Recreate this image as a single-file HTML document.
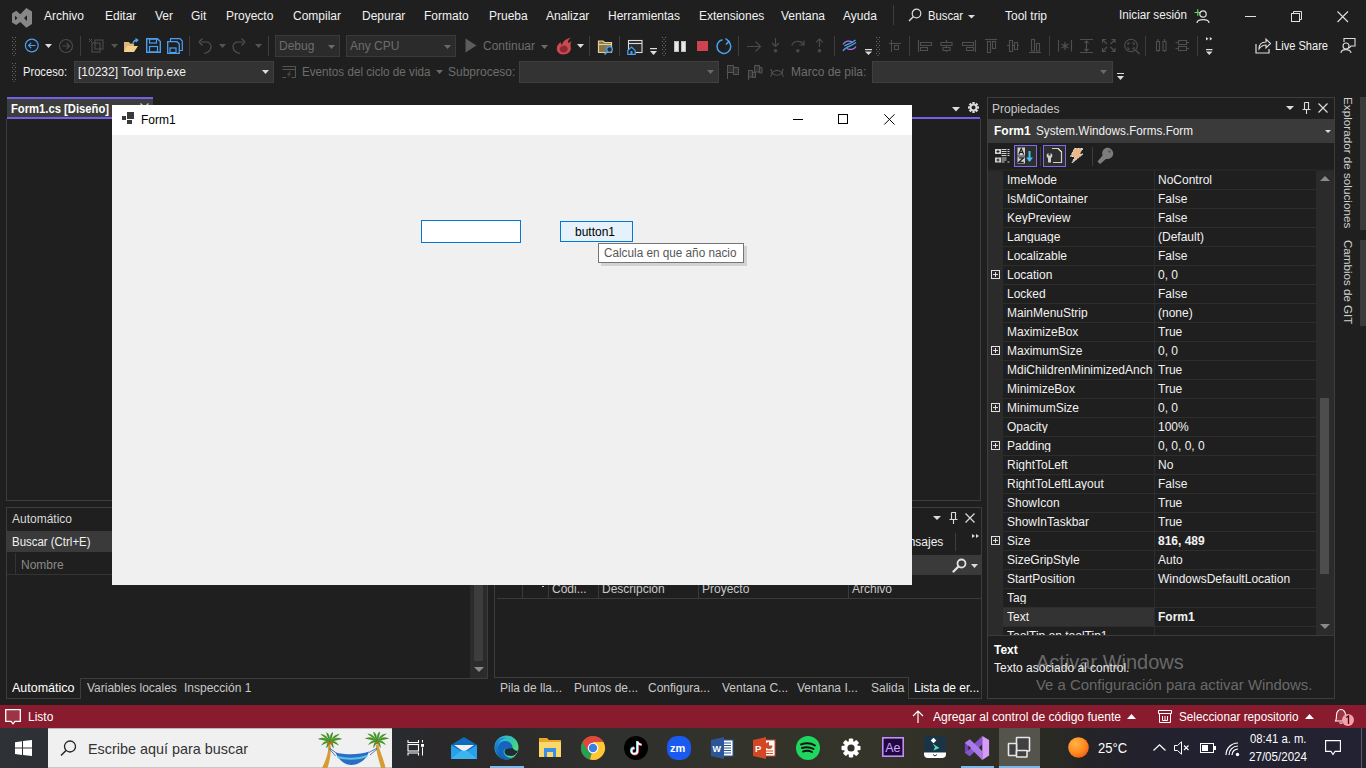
<!DOCTYPE html><html><head><meta charset="utf-8"><style>
html,body{margin:0;padding:0;width:1366px;height:768px;overflow:hidden;background:#1f1f1f;}
body{position:relative;font-family:"Liberation Sans",sans-serif;}
.a{position:absolute;}
.t{white-space:nowrap;line-height:1;}
svg{overflow:visible;}
</style></head><body>
<svg class="a" style="left:11px;top:7px;" width="22" height="22" viewBox="0 0 22 22"><path d="M5.2 3.8 L9.3 7.2 L15.3 1 L21 4.5 V17 L15.3 20.8 L9.3 15 L5.2 18 L1 15.5 V6.5 Z M4 8.7 V13.3 L6.5 11 Z M16 8.2 V14 L13 11 Z" fill="#878787" fill-rule="evenodd"/></svg>
<div class="a t" style="left:44px;top:9.84px;font-size:12px;color:#f1f1f1;">Archivo</div>
<div class="a t" style="left:105px;top:9.84px;font-size:12px;color:#f1f1f1;">Editar</div>
<div class="a t" style="left:155px;top:9.84px;font-size:12px;color:#f1f1f1;">Ver</div>
<div class="a t" style="left:191px;top:9.84px;font-size:12px;color:#f1f1f1;">Git</div>
<div class="a t" style="left:226px;top:9.84px;font-size:12px;color:#f1f1f1;">Proyecto</div>
<div class="a t" style="left:293px;top:9.84px;font-size:12px;color:#f1f1f1;">Compilar</div>
<div class="a t" style="left:362px;top:9.84px;font-size:12px;color:#f1f1f1;">Depurar</div>
<div class="a t" style="left:424px;top:9.84px;font-size:12px;color:#f1f1f1;">Formato</div>
<div class="a t" style="left:489px;top:9.84px;font-size:12px;color:#f1f1f1;">Prueba</div>
<div class="a t" style="left:546px;top:9.84px;font-size:12px;color:#f1f1f1;">Analizar</div>
<div class="a t" style="left:608px;top:9.84px;font-size:12px;color:#f1f1f1;">Herramientas</div>
<div class="a t" style="left:699px;top:9.84px;font-size:12px;color:#f1f1f1;">Extensiones</div>
<div class="a t" style="left:781px;top:9.84px;font-size:12px;color:#f1f1f1;">Ventana</div>
<div class="a t" style="left:843px;top:9.84px;font-size:12px;color:#f1f1f1;">Ayuda</div>
<div class="a" style="left:893px;top:5px;width:1px;height:20px;background:#3d3d3d;"></div>
<svg class="a" style="left:908px;top:8px;" width="14" height="14" viewBox="0 0 14 14"><circle cx="8.5" cy="5.5" r="4.3" fill="none" stroke="#dcdcdc" stroke-width="1.2"/><path d="M5.5 8.5 L1 13" stroke="#dcdcdc" stroke-width="1.4"/></svg>
<div class="a t" style="left:928px;top:9.84px;font-size:12px;color:#f1f1f1;transform-origin:0 0;transform:scaleX(0.9371);">Buscar</div>
<svg class="a" style="left:968px;top:15px;" width="7" height="4" viewBox="0 0 7 4"><path d="M0 0 H7 L3.5 3.5Z" fill="#dcdcdc"/></svg>
<div class="a t" style="left:1005px;top:9.84px;font-size:12px;color:#f1f1f1;">Tool trip</div>
<div class="a t" style="left:1119px;top:8.84px;font-size:12px;color:#f1f1f1;transform-origin:0 0;transform:scaleX(0.9710);">Iniciar sesión</div>
<svg class="a" style="left:1193px;top:7px;" width="16" height="16" viewBox="0 0 16 16"><path d="M1.5 5.5 H8 M4.75 2.2 V8.8" stroke="#5fd35f" stroke-width="1.2"/><circle cx="10" cy="7" r="3.2" fill="none" stroke="#e0e0e0" stroke-width="1.2"/><path d="M4 16 C4 11.5 16 11.5 16 16" fill="none" stroke="#e0e0e0" stroke-width="1.2"/></svg>
<div class="a" style="left:1245px;top:16px;width:11px;height:1px;background:#e0e0e0;"></div>
<svg class="a" style="left:1291px;top:11px;" width="12" height="12" viewBox="0 0 12 12"><rect x="0.5" y="2.5" width="8" height="8" fill="none" stroke="#e0e0e0"/><path d="M2.5 2.5 V0.5 H10.5 V8.5 H8.5" fill="none" stroke="#e0e0e0"/></svg>
<svg class="a" style="left:1337px;top:11px;" width="12" height="12" viewBox="0 0 12 12"><path d="M0.5 0.5 L11 11 M11 0.5 L0.5 11" stroke="#e0e0e0" stroke-width="1.1"/></svg>
<svg class="a" style="left:12px;top:37px;" width="4" height="17" viewBox="0 0 4 17"><rect x="0" y="0" width="1" height="1" fill="#6a6a6a"/><rect x="3" y="0" width="1" height="1" fill="#6a6a6a"/><rect x="1.5" y="2" width="1" height="1" fill="#6a6a6a"/><rect x="0" y="4" width="1" height="1" fill="#6a6a6a"/><rect x="3" y="4" width="1" height="1" fill="#6a6a6a"/><rect x="1.5" y="6" width="1" height="1" fill="#6a6a6a"/><rect x="0" y="8" width="1" height="1" fill="#6a6a6a"/><rect x="3" y="8" width="1" height="1" fill="#6a6a6a"/><rect x="1.5" y="10" width="1" height="1" fill="#6a6a6a"/><rect x="0" y="12" width="1" height="1" fill="#6a6a6a"/><rect x="3" y="12" width="1" height="1" fill="#6a6a6a"/><rect x="1.5" y="14" width="1" height="1" fill="#6a6a6a"/><rect x="0" y="16" width="1" height="1" fill="#6a6a6a"/><rect x="3" y="16" width="1" height="1" fill="#6a6a6a"/><rect x="1.5" y="18" width="1" height="1" fill="#6a6a6a"/></svg>
<svg class="a" style="left:24px;top:38px;" width="16" height="16" viewBox="0 0 16 16"><circle cx="7.8" cy="7.5" r="6.4" fill="none" stroke="#4aa0f0" stroke-width="1.2"/><path d="M11.5 7.5 H4.5 M7.2 4.8 L4.5 7.5 L7.2 10.2" fill="none" stroke="#4aa0f0" stroke-width="1.1"/></svg>
<svg class="a" style="left:45px;top:44px;" width="8" height="4" viewBox="0 0 8 4"><path d="M0 0 H7 L3.5 4Z" fill="#dcdcdc"/></svg>
<svg class="a" style="left:58px;top:38px;" width="16" height="16" viewBox="0 0 16 16"><circle cx="8" cy="8" r="6.5" fill="none" stroke="#4a4a4a" stroke-width="1.2"/><path d="M4.5 8 H11.5 M8.5 5 L11.5 8 L8.5 11" fill="none" stroke="#4a4a4a" stroke-width="1.2"/></svg>
<div class="a" style="left:80px;top:36px;width:1px;height:20px;background:#3d3d3d;"></div>
<svg class="a" style="left:88px;top:38px;" width="18" height="16" viewBox="0 0 18 16"><rect x="4" y="5" width="8" height="9" fill="none" stroke="#505050"/><rect x="7" y="2" width="8" height="9" fill="none" stroke="#505050"/><path d="M1 1 L4 4 M4 1 L1 4" stroke="#505050"/></svg>
<svg class="a" style="left:111px;top:44px;" width="8" height="4" viewBox="0 0 8 4"><path d="M0 0 H7 L3.5 4Z" fill="#555"/></svg>
<svg class="a" style="left:123px;top:38px;" width="16" height="15" viewBox="0 0 16 15"><path d="M1 4 H6 L7 5.5 H11 V14 H1Z" fill="#dcb67a"/><path d="M1 14 L4 8 H15 L11 14Z" fill="#f0d08a"/><path d="M10 5 C11 2 13 2 14.5 2 M12.5 0.5 L14.8 2 L12.8 4" fill="none" stroke="#4aa0f0" stroke-width="1.3"/></svg>
<svg class="a" style="left:146px;top:38px;" width="15" height="15" viewBox="0 0 15 15"><path d="M0.7 0.7 H11.5 L14.3 3.5 V14.3 H0.7Z" fill="none" stroke="#4aa0f0" stroke-width="1.4"/><rect x="3.5" y="1" width="7" height="4" fill="none" stroke="#4aa0f0" stroke-width="1.2"/><rect x="3.5" y="8.5" width="8" height="5.5" fill="none" stroke="#4aa0f0" stroke-width="1.2"/></svg>
<svg class="a" style="left:167px;top:38px;" width="16" height="16" viewBox="0 0 16 16"><path d="M0.7 3.7 H10 L12.3 6 V15.3 H0.7Z" fill="none" stroke="#4aa0f0" stroke-width="1.3"/><path d="M3.5 3.5 V0.7 H13 L15.3 3 V12.5 H12.5" fill="none" stroke="#4aa0f0" stroke-width="1.2"/><rect x="3" y="10" width="6" height="4.5" fill="none" stroke="#4aa0f0" stroke-width="1.2"/></svg>
<div class="a" style="left:189px;top:36px;width:1px;height:20px;background:#3d3d3d;"></div>
<svg class="a" style="left:198px;top:37px;" width="14" height="17" viewBox="0 0 14 17"><path d="M3 5 H8 C12 5 13 8 13 10 C13 13 10 15.5 6 16.5 M1 5 L4.5 1.5 M1 5 L4.5 8.5" fill="none" stroke="#505050" stroke-width="1.2"/></svg>
<svg class="a" style="left:219px;top:44px;" width="8" height="4" viewBox="0 0 8 4"><path d="M0 0 H7 L3.5 4Z" fill="#555"/></svg>
<svg class="a" style="left:232px;top:37px;" width="14" height="17" viewBox="0 0 14 17"><path d="M11 5 H6 C2 5 1 8 1 10 C1 13 4 15.5 8 16.5 M13 5 L9.5 1.5 M13 5 L9.5 8.5" fill="none" stroke="#505050" stroke-width="1.2"/></svg>
<svg class="a" style="left:255px;top:44px;" width="8" height="4" viewBox="0 0 8 4"><path d="M0 0 H7 L3.5 4Z" fill="#555"/></svg>
<div class="a" style="left:268px;top:36px;width:1px;height:20px;background:#3d3d3d;"></div>
<div class="a" style="left:275px;top:35px;width:65px;height:22px;background:#2b2b2b;box-sizing:border-box;border:1px solid #3a3a3a;"></div>
<div class="a t" style="left:279px;top:39.84px;font-size:12px;color:#6d6d6d;">Debug</div>
<svg class="a" style="left:328px;top:45px;" width="8" height="4" viewBox="0 0 8 4"><path d="M0 0 H7 L3.5 4Z" fill="#6a6a6a"/></svg>
<div class="a" style="left:346px;top:35px;width:110px;height:22px;background:#2b2b2b;box-sizing:border-box;border:1px solid #3a3a3a;"></div>
<div class="a t" style="left:350px;top:39.84px;font-size:12px;color:#6d6d6d;">Any CPU</div>
<svg class="a" style="left:444px;top:45px;" width="8" height="4" viewBox="0 0 8 4"><path d="M0 0 H7 L3.5 4Z" fill="#6a6a6a"/></svg>
<svg class="a" style="left:465px;top:38px;" width="12" height="15" viewBox="0 0 12 15"><path d="M0.5 0.5 L11.5 7.5 L0.5 14.5Z" fill="#5c5c5c"/></svg>
<div class="a t" style="left:483px;top:39.84px;font-size:12px;color:#6d6d6d;">Continuar</div>
<svg class="a" style="left:541px;top:45px;" width="8" height="4" viewBox="0 0 8 4"><path d="M0 0 H7 L3.5 4Z" fill="#6a6a6a"/></svg>
<svg class="a" style="left:556px;top:37px;" width="16" height="18" viewBox="0 0 16 18"><path d="M7 17.5 C3 17.5 0.5 14.5 0.8 11 C1 8 3 6.5 4.5 5 C5 6.5 5.2 7.5 6 8 C6.5 5 9 2 15 0.5 C12.5 2.5 11.5 4.5 12 6 C13 5.5 14 5 15.5 4.5 C14 6.5 14.5 8.5 14.8 10.5 C15.2 14.5 12 17.5 7 17.5Z" fill="#d04850"/><path d="M7.5 15.5 C5 15.5 3.5 13.5 3.8 11.5 C4.2 9.5 6 9 7.5 8.5 C9.5 8 11.5 9.5 11.8 11.5 C12 13.5 10.2 15.5 7.5 15.5Z" fill="#8a2a32"/></svg>
<svg class="a" style="left:577px;top:44px;" width="8" height="4" viewBox="0 0 8 4"><path d="M0 0 H7 L3.5 4Z" fill="#dcdcdc"/></svg>
<div class="a" style="left:589px;top:36px;width:1px;height:20px;background:#3d3d3d;"></div>
<svg class="a" style="left:597px;top:40px;" width="18" height="15" viewBox="0 0 18 15"><path d="M1.5 1 H6 L7.5 2.5 H14.5 V12.5 H1.5Z" fill="#857650" stroke="#e9d08e" stroke-width="1.2"/><path d="M1.5 4.5 H14.5" stroke="#e9d08e" stroke-width="1.1"/><circle cx="12.5" cy="9.5" r="2.8" fill="#2a2a2a" stroke="#4aa0f0" stroke-width="1.3"/><path d="M10.5 11.5 L7.5 14.5" stroke="#4aa0f0" stroke-width="1.6"/></svg>
<div class="a" style="left:619px;top:36px;width:1px;height:20px;background:#3d3d3d;"></div>
<svg class="a" style="left:627px;top:39px;" width="16" height="16" viewBox="0 0 16 16"><rect x="1.5" y="1.5" width="13.5" height="12" fill="#2a2a2a" stroke="#dcdcdc" stroke-width="1.1"/><path d="M1.5 4.5 H15" stroke="#dcdcdc" stroke-width="1.1"/><path d="M0.8 11.5 L4.5 8 L8.2 11.5 V15.3 H0.8Z" fill="#1f1f1f" stroke="#4aa0f0" stroke-width="1.2"/><rect x="3.5" y="12" width="2" height="3.3" fill="#4aa0f0"/></svg>
<svg class="a" style="left:650px;top:48px;" width="7" height="7" viewBox="0 0 7 7"><rect x="0" y="0" width="7" height="1.2" fill="#dcdcdc"/><path d="M0 3 H7 L3.5 7Z" fill="#dcdcdc"/></svg>
<svg class="a" style="left:662px;top:37px;" width="4" height="17" viewBox="0 0 4 17"><rect x="0" y="0" width="1" height="1" fill="#6a6a6a"/><rect x="3" y="0" width="1" height="1" fill="#6a6a6a"/><rect x="1.5" y="2" width="1" height="1" fill="#6a6a6a"/><rect x="0" y="4" width="1" height="1" fill="#6a6a6a"/><rect x="3" y="4" width="1" height="1" fill="#6a6a6a"/><rect x="1.5" y="6" width="1" height="1" fill="#6a6a6a"/><rect x="0" y="8" width="1" height="1" fill="#6a6a6a"/><rect x="3" y="8" width="1" height="1" fill="#6a6a6a"/><rect x="1.5" y="10" width="1" height="1" fill="#6a6a6a"/><rect x="0" y="12" width="1" height="1" fill="#6a6a6a"/><rect x="3" y="12" width="1" height="1" fill="#6a6a6a"/><rect x="1.5" y="14" width="1" height="1" fill="#6a6a6a"/><rect x="0" y="16" width="1" height="1" fill="#6a6a6a"/><rect x="3" y="16" width="1" height="1" fill="#6a6a6a"/><rect x="1.5" y="18" width="1" height="1" fill="#6a6a6a"/></svg>
<svg class="a" style="left:674px;top:41px;" width="12" height="11" viewBox="0 0 12 11"><rect x="0.5" y="0.5" width="4" height="10" fill="#e8e8e8" stroke="#bdbdbd"/><rect x="7.5" y="0.5" width="4" height="10" fill="#e8e8e8" stroke="#bdbdbd"/></svg>
<svg class="a" style="left:697px;top:41px;" width="11" height="10" viewBox="0 0 11 10"><rect x="0" y="0" width="11" height="10" fill="#cf4350"/></svg>
<svg class="a" style="left:716px;top:38px;" width="17" height="17" viewBox="0 0 17 17"><path d="M12.2 3.2 A6.9 6.9 0 1 1 6.5 1.8" fill="none" stroke="#4aa0f0" stroke-width="1.5"/><path d="M9.5 0.5 L13 3.3 L10 6.5" fill="none" stroke="#4aa0f0" stroke-width="1.5"/></svg>
<div class="a" style="left:738px;top:36px;width:1px;height:20px;background:#3d3d3d;"></div>
<svg class="a" style="left:747px;top:41px;" width="15" height="11" viewBox="0 0 15 11"><path d="M0 5.5 H13.5 M8.5 0.5 L13.5 5.5 L8.5 10.5" fill="none" stroke="#4a4a4a" stroke-width="1.2"/></svg>
<svg class="a" style="left:771px;top:38px;" width="9" height="15" viewBox="0 0 9 15"><path d="M4.5 0 V8.5 M1 5 L4.5 8.5 L8 5" fill="none" stroke="#4a4a4a" stroke-width="1.2"/><circle cx="4.5" cy="12.8" r="1.8" fill="#4a4a4a"/></svg>
<svg class="a" style="left:791px;top:39px;" width="14" height="14" viewBox="0 0 14 14"><path d="M0.8 6.5 C2.5 1.5 10 1 12.5 5.5 M13 1.5 V6 H8.5" fill="none" stroke="#4a4a4a" stroke-width="1.2"/><circle cx="6.8" cy="11.8" r="1.8" fill="#4a4a4a"/></svg>
<svg class="a" style="left:815px;top:38px;" width="9" height="15" viewBox="0 0 9 15"><path d="M4.5 9 V0.8 M1 4.3 L4.5 0.8 L8 4.3" fill="none" stroke="#4a4a4a" stroke-width="1.2"/><circle cx="4.5" cy="12.8" r="1.8" fill="#4a4a4a"/></svg>
<div class="a" style="left:834px;top:36px;width:1px;height:20px;background:#3d3d3d;"></div>
<svg class="a" style="left:842px;top:39px;" width="15" height="13" viewBox="0 0 15 13"><path d="M1 5.5 C3 1.5 8 1.5 10 3 M5 9.5 C7 11 12 11 14 7.5" fill="none" stroke="#b07ae8" stroke-width="1.3"/><path d="M1 12 C3 7.5 10 7 14 3.5 M2.5 7 C5 5 9 5 13.5 1" fill="none" stroke="#4aa0f0" stroke-width="1.3"/></svg>
<svg class="a" style="left:865px;top:49px;" width="7" height="6" viewBox="0 0 7 6"><rect x="0" y="0" width="7" height="1.2" fill="#dcdcdc"/><path d="M0 2.5 H7 L3.5 6Z" fill="#dcdcdc"/></svg>
<svg class="a" style="left:876px;top:37px;" width="4" height="17" viewBox="0 0 4 17"><rect x="0" y="0" width="1" height="1" fill="#6a6a6a"/><rect x="3" y="0" width="1" height="1" fill="#6a6a6a"/><rect x="1.5" y="2" width="1" height="1" fill="#6a6a6a"/><rect x="0" y="4" width="1" height="1" fill="#6a6a6a"/><rect x="3" y="4" width="1" height="1" fill="#6a6a6a"/><rect x="1.5" y="6" width="1" height="1" fill="#6a6a6a"/><rect x="0" y="8" width="1" height="1" fill="#6a6a6a"/><rect x="3" y="8" width="1" height="1" fill="#6a6a6a"/><rect x="1.5" y="10" width="1" height="1" fill="#6a6a6a"/><rect x="0" y="12" width="1" height="1" fill="#6a6a6a"/><rect x="3" y="12" width="1" height="1" fill="#6a6a6a"/><rect x="1.5" y="14" width="1" height="1" fill="#6a6a6a"/><rect x="0" y="16" width="1" height="1" fill="#6a6a6a"/><rect x="3" y="16" width="1" height="1" fill="#6a6a6a"/><rect x="1.5" y="18" width="1" height="1" fill="#6a6a6a"/></svg>
<svg class="a" style="left:889px;top:40px;" width="16" height="16" viewBox="0 0 16 16"><path d="M0 3.5 H12 M2.5 0 V12" stroke="#4d4d4d" stroke-width="1.1"/><rect x="5.5" y="5.5" width="4" height="4" fill="none" stroke="#4d4d4d" stroke-width="1.1"/></svg>
<div class="a" style="left:909px;top:36px;width:1px;height:20px;background:#3d3d3d;"></div>
<svg class="a" style="left:905px;top:32px" width="310" height="26" viewBox="905 32 310 26"><path d="M918.5 40 V52" fill="none" stroke="#4f4f4f" stroke-width="1.1"/><path d="M920.5 42.5 H931.5 V45.5 H920.5Z" fill="none" stroke="#4f4f4f" stroke-width="1.1"/><path d="M920.5 47.5 H927.5 V50.5 H920.5Z" fill="none" stroke="#4f4f4f" stroke-width="1.1"/><path d="M946.5 40 V52" fill="none" stroke="#4f4f4f" stroke-width="1.1"/><path d="M941 42.5 H952 V45.5 H941Z" fill="#1f1f1f" stroke="#4f4f4f" stroke-width="1.1"/><path d="M943 47.5 H950 V50.5 H943Z" fill="#1f1f1f" stroke="#4f4f4f" stroke-width="1.1"/><path d="M975.5 40 V52" fill="none" stroke="#4f4f4f" stroke-width="1.1"/><path d="M962.5 42.5 H973.5 V45.5 H962.5Z" fill="none" stroke="#4f4f4f" stroke-width="1.1"/><path d="M966.5 47.5 H973.5 V50.5 H966.5Z" fill="none" stroke="#4f4f4f" stroke-width="1.1"/><path d="M985 39.5 H997" fill="none" stroke="#4f4f4f" stroke-width="1.1"/><path d="M987.5 41.5 H990.5 V52.5 H987.5Z" fill="none" stroke="#4f4f4f" stroke-width="1.1"/><path d="M992.5 41.5 H995.5 V48.5 H992.5Z" fill="none" stroke="#4f4f4f" stroke-width="1.1"/><path d="M1007 45.5 H1019" fill="none" stroke="#4f4f4f" stroke-width="1.1"/><path d="M1009.5 40.5 H1012.5 V51.5 H1009.5Z" fill="#1f1f1f" stroke="#4f4f4f" stroke-width="1.1"/><path d="M1014.5 42.5 H1017.5 V49.5 H1014.5Z" fill="#1f1f1f" stroke="#4f4f4f" stroke-width="1.1"/><path d="M1029 52.5 H1041" fill="none" stroke="#4f4f4f" stroke-width="1.1"/><path d="M1031.5 39.5 H1034.5 V51 H1031.5Z" fill="none" stroke="#4f4f4f" stroke-width="1.1"/><path d="M1036.5 43.5 H1039.5 V51 H1036.5Z" fill="none" stroke="#4f4f4f" stroke-width="1.1"/><path d="M1058.5 40 V51.5 M1071.5 40 V51.5" fill="none" stroke="#4f4f4f" stroke-width="1.1"/><path d="M1065 42 V50 M1061.5 44 L1068.5 48 M1068.5 44 L1061.5 48" fill="none" stroke="#4f4f4f" stroke-width="1.3"/><path d="M1080 39.5 H1093 M1080 52.5 H1093 M1086.5 41 V51 M1084.5 43 L1086.5 41 L1088.5 43 M1084.5 49 L1086.5 51 L1088.5 49" fill="none" stroke="#4f4f4f" stroke-width="1.1"/><path d="M1102.5 43 V39.5 H1106 M1111.5 39.5 H1115 V43 M1115 48 V51.5 H1111.5 M1106 51.5 H1102.5 V48 M1103 40 L1107 44 M1114.5 40 L1110.5 44 M1114.5 51 L1110.5 47 M1103 51 L1107 47" fill="none" stroke="#4f4f4f" stroke-width="1.1"/><circle cx="1131" cy="45.5" r="6.3" fill="none" stroke="#4f4f4f" stroke-width="1.1"/><path d="M1135.5 50 L1139.5 54" fill="none" stroke="#4f4f4f" stroke-width="1.3"/><path d="M1128 45 V43 H1130 M1132 43 H1134 V45 M1134 47 V49 H1132 M1130 49 H1128 V47" fill="none" stroke="#4f4f4f" stroke-width="1.1"/><path d="M1158 39 V52 M1164.5 39 V52" fill="none" stroke="#4f4f4f" stroke-width="1.1"/><path d="M1156.5 41.5 H1159.5 V50.5 H1156.5Z" fill="#1f1f1f" stroke="#4f4f4f" stroke-width="1.1"/><path d="M1163 41.5 H1166 V50.5 H1163Z" fill="#1f1f1f" stroke="#4f4f4f" stroke-width="1.1"/><path d="M1175.5 42.5 H1189 M1175.5 48.5 H1189" fill="none" stroke="#4f4f4f" stroke-width="1.1"/><path d="M1178.5 40.5 H1186.5 V44.5 H1178.5Z" fill="#1f1f1f" stroke="#4f4f4f" stroke-width="1.1"/><path d="M1178.5 46.5 H1186.5 V50.5 H1178.5Z" fill="#1f1f1f" stroke="#4f4f4f" stroke-width="1.1"/></svg>
<div class="a" style="left:1049px;top:36px;width:1px;height:20px;background:#3d3d3d;"></div>
<div class="a" style="left:1145px;top:36px;width:1px;height:20px;background:#3d3d3d;"></div>
<div class="a" style="left:1197px;top:36px;width:1px;height:20px;background:#3d3d3d;"></div>
<svg class="a" style="left:1206px;top:37px;" width="7" height="18" viewBox="0 0 7 18"><path d="M0 0 L2.5 1.7 L0 3.4Z M3.8 0 L6.3 1.7 L3.8 3.4Z" fill="#dcdcdc"/><rect x="0" y="12" width="6.5" height="1.2" fill="#dcdcdc"/><path d="M0 14.5 H6.5 L3.25 18Z" fill="#dcdcdc"/></svg>
<svg class="a" style="left:1255px;top:37px;" width="16" height="17" viewBox="0 0 16 17"><path d="M1 7 V16 H14 V12" fill="none" stroke="#dcdcdc" stroke-width="1.2"/><path d="M4 12 C4 7 7 5 11 5 V2 L15.5 6.5 L11 11 V8 C8 8 6 9 4 12Z" fill="none" stroke="#dcdcdc" stroke-width="1.1"/></svg>
<div class="a t" style="left:1275px;top:39.84px;font-size:12px;color:#f1f1f1;transform-origin:0 0;transform:scaleX(0.9238);">Live Share</div>
<svg class="a" style="left:1340px;top:38px;" width="16" height="15" viewBox="0 0 16 15"><circle cx="6" cy="8" r="3" fill="none" stroke="#dcdcdc" stroke-width="1.1"/><path d="M1 15 C1 10.5 11 10.5 11 15" fill="none" stroke="#dcdcdc" stroke-width="1.1"/><path d="M4 4 V0.5 H15 V8 H11 L9 10" fill="none" stroke="#dcdcdc" stroke-width="1.1"/></svg>
<svg class="a" style="left:12px;top:63px;" width="4" height="17" viewBox="0 0 4 17"><rect x="0" y="0" width="1" height="1" fill="#6a6a6a"/><rect x="3" y="0" width="1" height="1" fill="#6a6a6a"/><rect x="1.5" y="2" width="1" height="1" fill="#6a6a6a"/><rect x="0" y="4" width="1" height="1" fill="#6a6a6a"/><rect x="3" y="4" width="1" height="1" fill="#6a6a6a"/><rect x="1.5" y="6" width="1" height="1" fill="#6a6a6a"/><rect x="0" y="8" width="1" height="1" fill="#6a6a6a"/><rect x="3" y="8" width="1" height="1" fill="#6a6a6a"/><rect x="1.5" y="10" width="1" height="1" fill="#6a6a6a"/><rect x="0" y="12" width="1" height="1" fill="#6a6a6a"/><rect x="3" y="12" width="1" height="1" fill="#6a6a6a"/><rect x="1.5" y="14" width="1" height="1" fill="#6a6a6a"/><rect x="0" y="16" width="1" height="1" fill="#6a6a6a"/><rect x="3" y="16" width="1" height="1" fill="#6a6a6a"/><rect x="1.5" y="18" width="1" height="1" fill="#6a6a6a"/></svg>
<div class="a t" style="left:23px;top:65.84px;font-size:12px;color:#f1f1f1;transform-origin:0 0;transform:scaleX(0.9291);">Proceso:</div>
<div class="a" style="left:74px;top:61px;width:200px;height:22px;background:#333333;box-sizing:border-box;border:1px solid #3f3f3f;"></div>
<div class="a t" style="left:78px;top:65.84px;font-size:12px;color:#f1f1f1;">[10232] Tool trip.exe</div>
<svg class="a" style="left:262px;top:70px;" width="8" height="4" viewBox="0 0 8 4"><path d="M0 0 H7 L3.5 4Z" fill="#dcdcdc"/></svg>
<svg class="a" style="left:282px;top:66px;" width="15" height="13" viewBox="0 0 15 13"><path d="M0.5 0.5 H13.5 V11.5 H9.5 M4 11.5 H0.5 Z" fill="none" stroke="#555" stroke-width="1"/><path d="M0.5 3.5 H13.5" stroke="#555" stroke-width="1"/><path d="M8 5 L5 8.8 H7.2 L5.3 12.3 L9 7.8 H6.8 L8.5 5Z" fill="#555"/></svg>
<div class="a t" style="left:301.5px;top:65.84px;font-size:12px;color:#6d6d6d;transform-origin:0 0;transform:scaleX(0.9729);">Eventos del ciclo de vida</div>
<svg class="a" style="left:436px;top:70px;" width="8" height="4" viewBox="0 0 8 4"><path d="M0 0 H7 L3.5 4Z" fill="#6a6a6a"/></svg>
<div class="a t" style="left:448px;top:65.84px;font-size:12px;color:#6d6d6d;">Subproceso:</div>
<div class="a" style="left:519px;top:61px;width:200px;height:22px;background:#333333;box-sizing:border-box;border:1px solid #3f3f3f;"></div>
<svg class="a" style="left:707px;top:70px;" width="8" height="4" viewBox="0 0 8 4"><path d="M0 0 H7 L3.5 4Z" fill="#6a6a6a"/></svg>
<svg class="a" style="left:715px;top:58px" width="85" height="28" viewBox="715 58 85 28"><g fill="#303030" stroke="#555" stroke-width="1"><path d="M727.5 65.5 H733.5 V72.5 H727.5Z"/><path d="M733.5 67.5 H738.5 V74.5 H733.5Z"/><path d="M748.5 70.5 H752.5 V77 H748.5Z"/><path d="M752.5 72.5 H755.5 V77.5 H752.5Z"/><path d="M754.5 65.5 H759.5 V72 H754.5Z"/><path d="M759.5 67.5 H762 V73 H759.5Z"/></g><path d="M727.5 65 V79 M748.5 70 V80" stroke="#555" stroke-width="1"/><g fill="none" stroke="#4f4f4f" stroke-width="1.1"><path d="M770.5 69 C772.5 71 772.5 74.5 770.5 76.7"/><path d="M783.5 69 C781.5 71 781.5 74.5 783.5 76.7"/><path d="M771.8 72.8 C775 69.8 779 69.8 782.2 72.8 C779 75.8 775 75.8 771.8 72.8Z"/></g></svg>
<div class="a t" style="left:791px;top:65.84px;font-size:12px;color:#6d6d6d;">Marco de pila:</div>
<div class="a" style="left:872px;top:61px;width:241px;height:22px;background:#333333;box-sizing:border-box;border:1px solid #3f3f3f;"></div>
<svg class="a" style="left:1100px;top:70px;" width="8" height="4" viewBox="0 0 8 4"><path d="M0 0 H7 L3.5 4Z" fill="#6a6a6a"/></svg>
<svg class="a" style="left:1117px;top:73px;" width="8" height="9" viewBox="0 0 8 9"><rect x="0" y="0" width="7" height="1" fill="#dcdcdc"/><path d="M0 3 H7 L3.5 7Z" fill="#dcdcdc"/></svg>
<div class="a" style="left:7px;top:97px;width:146px;height:2px;background:#7160e8;"></div>
<div class="a" style="left:7px;top:99px;width:146px;height:18px;background:#3d3d3d;"></div>
<div class="a t" style="left:11px;top:102.84px;font-size:12px;color:#ffffff;font-weight:700;transform-origin:0 0;transform:scaleX(0.9361);">Form1.cs [Diseño]</div>
<svg class="a" style="left:140px;top:103px;" width="9" height="9" viewBox="0 0 9 9"><path d="M0.5 0.5 L8.5 8.5 M8.5 0.5 L0.5 8.5" stroke="#cfcfcf" stroke-width="1.1"/></svg>
<div class="a" style="left:7px;top:117px;width:973px;height:2px;background:#7160e8;"></div>
<svg class="a" style="left:952px;top:107px;" width="8" height="5" viewBox="0 0 8 5"><path d="M0 0 H8 L4 4.5Z" fill="#dcdcdc"/></svg>
<svg class="a" style="left:968px;top:102px;" width="11" height="11" viewBox="0 0 11 11"><g fill="#dcdcdc"><circle cx="5.5" cy="5.5" r="3.6"/><rect x="4.3" y="0" width="2.4" height="11"/><rect x="0" y="4.3" width="11" height="2.4"/><rect x="4.3" y="0" width="2.4" height="11" transform="rotate(45 5.5 5.5)"/><rect x="4.3" y="0" width="2.4" height="11" transform="rotate(-45 5.5 5.5)"/></g><circle cx="5.5" cy="5.5" r="2" fill="#1f1f1f"/></svg>
<div class="a" style="left:6px;top:119px;width:1px;height:382px;background:#3d3d3d;"></div>
<div class="a" style="left:980px;top:119px;width:1px;height:382px;background:#3d3d3d;"></div>
<div class="a" style="left:6px;top:500px;width:975px;height:1px;background:#3d3d3d;"></div>
<div class="a" style="left:6px;top:507px;width:482px;height:1px;background:#3d3d3d;"></div>
<div class="a" style="left:6px;top:507px;width:1px;height:192px;background:#3d3d3d;"></div>
<div class="a" style="left:487px;top:507px;width:1px;height:172px;background:#3d3d3d;"></div>
<div class="a" style="left:81px;top:678px;width:407px;height:1px;background:#3d3d3d;"></div>
<div class="a" style="left:6px;top:698px;width:75px;height:1px;background:#3d3d3d;"></div>
<div class="a" style="left:80px;top:678px;width:1px;height:21px;background:#3d3d3d;"></div>
<div class="a t" style="left:12px;top:512.84px;font-size:12px;color:#d8d8d8;">Automático</div>
<div class="a" style="left:7px;top:531px;width:480px;height:21px;background:#3a3a3a;"></div>
<div class="a t" style="left:12px;top:535.84px;font-size:12px;color:#f1f1f1;transform-origin:0 0;transform:scaleX(0.9532);">Buscar (Ctrl+E)</div>
<div class="a" style="left:15px;top:553px;width:1px;height:21px;background:#333;"></div>
<div class="a t" style="left:21px;top:558.84px;font-size:12px;color:#8a8a8a;">Nombre</div>
<div class="a" style="left:7px;top:574px;width:463px;height:1px;background:#333;"></div>
<div class="a" style="left:470px;top:575px;width:17px;height:103px;background:#2b2b2b;"></div>
<div class="a" style="left:474px;top:575px;width:9px;height:86px;background:#3d3d3d;"></div>
<svg class="a" style="left:474px;top:667px;" width="10" height="5" viewBox="0 0 10 5"><path d="M0 0 H10 L5 5Z" fill="#8a8a8a"/></svg>
<div class="a t" style="left:12px;top:681.84px;font-size:12px;color:#ffffff;transform-origin:0 0;transform:scaleX(1.0412);">Automático</div>
<div class="a t" style="left:87px;top:681.84px;font-size:12px;color:#c8c8c8;">Variables locales</div>
<div class="a t" style="left:184px;top:681.84px;font-size:12px;color:#c8c8c8;">Inspección 1</div>
<div class="a" style="left:494px;top:507px;width:488px;height:1px;background:#3d3d3d;"></div>
<div class="a" style="left:494px;top:507px;width:1px;height:171px;background:#3d3d3d;"></div>
<div class="a" style="left:981px;top:507px;width:1px;height:192px;background:#3d3d3d;"></div>
<div class="a" style="left:494px;top:677px;width:414px;height:1px;background:#3d3d3d;"></div>
<div class="a" style="left:908px;top:677px;width:1px;height:22px;background:#3d3d3d;"></div>
<div class="a" style="left:908px;top:698px;width:74px;height:1px;background:#3d3d3d;"></div>
<svg class="a" style="left:933px;top:516px;" width="8" height="4" viewBox="0 0 8 4"><path d="M0 0 H8 L4 4Z" fill="#dcdcdc"/></svg>
<svg class="a" style="left:949px;top:512px;" width="9" height="12" viewBox="0 0 9 12"><path d="M2.5 0.5 H6.5 V7.5 M2.5 0.5 V7.5 M0.5 7.5 H8.5 M4.5 7.5 V12" fill="none" stroke="#dcdcdc" stroke-width="1.1"/></svg>
<svg class="a" style="left:965px;top:513px;" width="10" height="10" viewBox="0 0 10 10"><path d="M0.5 0.5 L9.5 9.5 M9.5 0.5 L0.5 9.5" stroke="#dcdcdc" stroke-width="1.2"/></svg>
<div class="a t" style="left:892px;top:535.84px;font-size:12px;color:#f1f1f1;">Mensajes</div>
<div class="a" style="left:955px;top:533px;width:1px;height:18px;background:#3d3d3d;"></div>
<svg class="a" style="left:972px;top:534px;" width="7" height="4" viewBox="0 0 7 4"><path d="M0 0 L3 2 L0 4Z M4 0 L7 2 L4 4Z" fill="#dcdcdc"/></svg>
<div class="a" style="left:495px;top:555px;width:486px;height:20px;background:#3a3a3a;"></div>
<svg class="a" style="left:952px;top:558px;" width="15" height="15" viewBox="0 0 15 15"><circle cx="9.5" cy="5.5" r="4" fill="none" stroke="#e0e0e0" stroke-width="1.8"/><path d="M6.5 8.5 L1.5 13.5" stroke="#e0e0e0" stroke-width="2.4" stroke-linecap="round"/></svg>
<svg class="a" style="left:971px;top:564px;" width="7" height="4" viewBox="0 0 7 4"><path d="M0 0 H7 L3.5 4Z" fill="#dcdcdc"/></svg>
<div class="a" style="left:522px;top:576px;width:1px;height:22px;background:#3a3a3a;"></div>
<div class="a" style="left:548px;top:576px;width:1px;height:22px;background:#3a3a3a;"></div>
<div class="a" style="left:598px;top:576px;width:1px;height:22px;background:#3a3a3a;"></div>
<div class="a" style="left:698px;top:576px;width:1px;height:22px;background:#3a3a3a;"></div>
<div class="a" style="left:848px;top:576px;width:1px;height:22px;background:#3a3a3a;"></div>
<div class="a" style="left:497px;top:598px;width:484px;height:1px;background:#3a3a3a;"></div>
<div class="a t" style="left:552px;top:582.84px;font-size:12px;color:#c8c8c8;">Códi...</div>
<div class="a" style="left:542px;top:586px;width:2px;height:1px;background:#d0d0d0;"></div>
<div class="a t" style="left:602px;top:582.84px;font-size:12px;color:#c8c8c8;">Descripción</div>
<div class="a t" style="left:702px;top:582.84px;font-size:12px;color:#c8c8c8;">Proyecto</div>
<div class="a t" style="left:852px;top:582.84px;font-size:12px;color:#c8c8c8;">Archivo</div>
<div class="a t" style="left:500px;top:681.84px;font-size:12px;color:#c8c8c8;">Pila de lla...</div>
<div class="a t" style="left:574px;top:681.84px;font-size:12px;color:#c8c8c8;">Puntos de...</div>
<div class="a t" style="left:648px;top:681.84px;font-size:12px;color:#c8c8c8;">Configura...</div>
<div class="a t" style="left:722px;top:681.84px;font-size:12px;color:#c8c8c8;">Ventana C...</div>
<div class="a t" style="left:797px;top:681.84px;font-size:12px;color:#c8c8c8;">Ventana I...</div>
<div class="a t" style="left:871px;top:681.84px;font-size:12px;color:#c8c8c8;">Salida</div>
<div class="a t" style="left:914px;top:681.84px;font-size:12px;color:#ffffff;">Lista de er...</div>
<div class="a" style="left:987px;top:97px;width:348px;height:602px;box-sizing:border-box;border:1px solid #3d3d3d;"></div>
<div class="a t" style="left:992px;top:102.84px;font-size:12px;color:#c8c8c8;">Propiedades</div>
<svg class="a" style="left:1286px;top:106px;" width="8" height="4" viewBox="0 0 8 4"><path d="M0 0 H8 L4 4Z" fill="#dcdcdc"/></svg>
<svg class="a" style="left:1302px;top:102px;" width="9" height="12" viewBox="0 0 9 12"><path d="M2.5 0.5 H6.5 V7.5 M2.5 0.5 V7.5 M0.5 7.5 H8.5 M4.5 7.5 V12" fill="none" stroke="#dcdcdc" stroke-width="1.1"/></svg>
<svg class="a" style="left:1318px;top:103px;" width="10" height="10" viewBox="0 0 10 10"><path d="M0.5 0.5 L9.5 9.5 M9.5 0.5 L0.5 9.5" stroke="#dcdcdc" stroke-width="1.2"/></svg>
<div class="a" style="left:988px;top:119px;width:346px;height:24px;background:#3a3a3a;"></div>
<div class="a t" style="left:994px;top:124.84px;font-size:12px;color:#ffffff;font-weight:700;">Form1</div>
<div class="a t" style="left:1036px;top:124.84px;font-size:12px;color:#f1f1f1;transform-origin:0 0;transform:scaleX(0.9771);">System.Windows.Forms.Form</div>
<svg class="a" style="left:1325px;top:130px;" width="6" height="3" viewBox="0 0 6 3"><path d="M0 0 H6 L3 3Z" fill="#dcdcdc"/></svg>
<svg class="a" style="left:994px;top:148px;" width="16" height="15" viewBox="0 0 16 15"><g fill="#d0d0d0"><rect x="1" y="1" width="6" height="5"/><rect x="1" y="9.5" width="6" height="5"/><rect x="7.5" y="1" width="5" height="1"/><rect x="7.5" y="3" width="5" height="1"/><rect x="7.5" y="5" width="5" height="1"/><rect x="7.5" y="7" width="5" height="1"/><rect x="7.5" y="9.5" width="5" height="1"/><rect x="7.5" y="11.5" width="5" height="1"/><rect x="7.5" y="13.5" width="3" height="1"/><rect x="13.5" y="1" width="2" height="1"/><rect x="13.5" y="3" width="2" height="1"/><rect x="13.5" y="5" width="2" height="1"/><rect x="13.5" y="7" width="2" height="1"/><rect x="13.5" y="13.5" width="2" height="1"/></g><path d="M2.5 3.5 H5.5 M4 2 V5 M2.5 12 H5.5 M4 10.5 V13.5" stroke="#1f1f1f"/></svg>
<div class="a" style="left:1014px;top:145px;width:23px;height:22px;background:#2e2e2e;box-sizing:border-box;border:1px solid #7d6cf0;"></div>
<svg class="a" style="left:1017px;top:147px;" width="17" height="17" viewBox="0 0 17 17"><rect x="0.5" y="0.5" width="7.5" height="8" fill="#d0d0d0"/><path d="M1.8 7.5 L4.25 1.5 L6.7 7.5 M2.8 5.3 H5.7" fill="none" stroke="#1f1f1f" stroke-width="1.2"/><rect x="0.5" y="9.5" width="7.5" height="7" fill="#d0d0d0"/><path d="M1.8 10.8 H6.5 L1.8 15.3 H6.7" fill="none" stroke="#1f1f1f" stroke-width="1.3"/><path d="M12.5 4 V14" stroke="#3cc0f5" stroke-width="2"/><path d="M9 10.5 L12.5 15 L16 10.5Z" fill="#3cc0f5"/></svg>
<div class="a" style="left:1040px;top:147px;width:1px;height:19px;background:#3d3d3d;"></div>
<div class="a" style="left:1043px;top:145px;width:23px;height:22px;background:#2e2e2e;box-sizing:border-box;border:1px solid #7d6cf0;"></div>
<svg class="a" style="left:1045px;top:147px;" width="18" height="17" viewBox="0 0 18 17"><path d="M7 1.5 H13 L16.5 5 V15.5 H8" fill="none" stroke="#d0d0d0" stroke-width="1.2"/><path d="M13 1 L17 5" stroke="#e8e8e8" stroke-width="1"/><path d="M3.5 6 C1.2 6.8 1 9.8 3 11 V15.5 H6 V11 C8 9.8 7.8 6.8 5.5 6 V8.5 H3.5Z" fill="#d0d0d0"/></svg>
<svg class="a" style="left:1069px;top:147px;" width="16" height="17" viewBox="0 0 16 17"><path d="M5.5 1.5 H14 L10 7 H14 L3 16 L6 9.5 H1.5Z" fill="#f2b780" stroke="#e8e8e8" stroke-width="1" stroke-dasharray="2 1"/></svg>
<div class="a" style="left:1092px;top:147px;width:1px;height:19px;background:#3d3d3d;"></div>
<svg class="a" style="left:1097px;top:147px;" width="17" height="17" viewBox="0 0 17 17"><path d="M10.5 0.8 C13.5 0.8 16.2 3.5 16.2 6.5 C16.2 9.5 13.5 12 10.5 12 L9 12 L3 17 L0.5 14.5 L5.5 8.5 L5.2 6.5 C5.2 3.5 7.5 0.8 10.5 0.8Z" fill="#7d7d7d"/><path d="M11.5 3.5 L13.5 5.5" stroke="#5a5a5a" stroke-width="2"/></svg>
<div class="a" style="left:988px;top:169px;width:346px;height:2px;background:#252525;"></div>
<div class="a" style="left:988px;top:171px;width:15px;height:464px;background:#2b2b2b;"></div>
<div class="a" style="left:988px;top:635px;width:346px;height:1px;background:#3a3a3a;"></div>
<div class="a" style="left:1003px;top:171px;width:313px;height:464px;overflow:hidden;background:#2d2d2d">
<div class="a" style="left:0;top:0px;width:151px;height:18px;background:#1f1f1f"></div>
<div class="a" style="left:152px;top:0px;width:161px;height:18px;background:#1f1f1f"></div>
<div class="a t" style="left:4px;top:2.84px;width:146px;overflow:hidden;font-size:12px;color:#f1f1f1">ImeMode</div>
<div class="a t" style="left:155px;top:2.84px;font-size:12px;color:#f1f1f1;">NoControl</div>
<div class="a" style="left:0;top:19px;width:151px;height:18px;background:#1f1f1f"></div>
<div class="a" style="left:152px;top:19px;width:161px;height:18px;background:#1f1f1f"></div>
<div class="a t" style="left:4px;top:21.84px;width:146px;overflow:hidden;font-size:12px;color:#f1f1f1">IsMdiContainer</div>
<div class="a t" style="left:155px;top:21.84px;font-size:12px;color:#f1f1f1;">False</div>
<div class="a" style="left:0;top:38px;width:151px;height:18px;background:#1f1f1f"></div>
<div class="a" style="left:152px;top:38px;width:161px;height:18px;background:#1f1f1f"></div>
<div class="a t" style="left:4px;top:40.84px;width:146px;overflow:hidden;font-size:12px;color:#f1f1f1">KeyPreview</div>
<div class="a t" style="left:155px;top:40.84px;font-size:12px;color:#f1f1f1;">False</div>
<div class="a" style="left:0;top:57px;width:151px;height:18px;background:#1f1f1f"></div>
<div class="a" style="left:152px;top:57px;width:161px;height:18px;background:#1f1f1f"></div>
<div class="a t" style="left:4px;top:59.84px;width:146px;overflow:hidden;font-size:12px;color:#f1f1f1">Language</div>
<div class="a t" style="left:155px;top:59.84px;font-size:12px;color:#f1f1f1;">(Default)</div>
<div class="a" style="left:0;top:76px;width:151px;height:18px;background:#1f1f1f"></div>
<div class="a" style="left:152px;top:76px;width:161px;height:18px;background:#1f1f1f"></div>
<div class="a t" style="left:4px;top:78.84px;width:146px;overflow:hidden;font-size:12px;color:#f1f1f1">Localizable</div>
<div class="a t" style="left:155px;top:78.84px;font-size:12px;color:#f1f1f1;">False</div>
<div class="a" style="left:0;top:95px;width:151px;height:18px;background:#1f1f1f"></div>
<div class="a" style="left:152px;top:95px;width:161px;height:18px;background:#1f1f1f"></div>
<div class="a t" style="left:4px;top:97.84px;width:146px;overflow:hidden;font-size:12px;color:#f1f1f1">Location</div>
<div class="a t" style="left:155px;top:97.84px;font-size:12px;color:#f1f1f1;">0, 0</div>
<div class="a" style="left:0;top:114px;width:151px;height:18px;background:#1f1f1f"></div>
<div class="a" style="left:152px;top:114px;width:161px;height:18px;background:#1f1f1f"></div>
<div class="a t" style="left:4px;top:116.84px;width:146px;overflow:hidden;font-size:12px;color:#f1f1f1">Locked</div>
<div class="a t" style="left:155px;top:116.84px;font-size:12px;color:#f1f1f1;">False</div>
<div class="a" style="left:0;top:133px;width:151px;height:18px;background:#1f1f1f"></div>
<div class="a" style="left:152px;top:133px;width:161px;height:18px;background:#1f1f1f"></div>
<div class="a t" style="left:4px;top:135.84px;width:146px;overflow:hidden;font-size:12px;color:#f1f1f1">MainMenuStrip</div>
<div class="a t" style="left:155px;top:135.84px;font-size:12px;color:#f1f1f1;">(none)</div>
<div class="a" style="left:0;top:152px;width:151px;height:18px;background:#1f1f1f"></div>
<div class="a" style="left:152px;top:152px;width:161px;height:18px;background:#1f1f1f"></div>
<div class="a t" style="left:4px;top:154.84px;width:146px;overflow:hidden;font-size:12px;color:#f1f1f1">MaximizeBox</div>
<div class="a t" style="left:155px;top:154.84px;font-size:12px;color:#f1f1f1;">True</div>
<div class="a" style="left:0;top:171px;width:151px;height:18px;background:#1f1f1f"></div>
<div class="a" style="left:152px;top:171px;width:161px;height:18px;background:#1f1f1f"></div>
<div class="a t" style="left:4px;top:173.84px;width:146px;overflow:hidden;font-size:12px;color:#f1f1f1">MaximumSize</div>
<div class="a t" style="left:155px;top:173.84px;font-size:12px;color:#f1f1f1;">0, 0</div>
<div class="a" style="left:0;top:190px;width:151px;height:18px;background:#1f1f1f"></div>
<div class="a" style="left:152px;top:190px;width:161px;height:18px;background:#1f1f1f"></div>
<div class="a t" style="left:4px;top:192.84px;width:146px;overflow:hidden;font-size:12px;color:#f1f1f1">MdiChildrenMinimizedAnchorBottom</div>
<div class="a t" style="left:155px;top:192.84px;font-size:12px;color:#f1f1f1;">True</div>
<div class="a" style="left:0;top:209px;width:151px;height:18px;background:#1f1f1f"></div>
<div class="a" style="left:152px;top:209px;width:161px;height:18px;background:#1f1f1f"></div>
<div class="a t" style="left:4px;top:211.84px;width:146px;overflow:hidden;font-size:12px;color:#f1f1f1">MinimizeBox</div>
<div class="a t" style="left:155px;top:211.84px;font-size:12px;color:#f1f1f1;">True</div>
<div class="a" style="left:0;top:228px;width:151px;height:18px;background:#1f1f1f"></div>
<div class="a" style="left:152px;top:228px;width:161px;height:18px;background:#1f1f1f"></div>
<div class="a t" style="left:4px;top:230.84px;width:146px;overflow:hidden;font-size:12px;color:#f1f1f1">MinimumSize</div>
<div class="a t" style="left:155px;top:230.84px;font-size:12px;color:#f1f1f1;">0, 0</div>
<div class="a" style="left:0;top:247px;width:151px;height:18px;background:#1f1f1f"></div>
<div class="a" style="left:152px;top:247px;width:161px;height:18px;background:#1f1f1f"></div>
<div class="a t" style="left:4px;top:249.84px;width:146px;overflow:hidden;font-size:12px;color:#f1f1f1">Opacity</div>
<div class="a t" style="left:155px;top:249.84px;font-size:12px;color:#f1f1f1;">100%</div>
<div class="a" style="left:0;top:266px;width:151px;height:18px;background:#1f1f1f"></div>
<div class="a" style="left:152px;top:266px;width:161px;height:18px;background:#1f1f1f"></div>
<div class="a t" style="left:4px;top:268.84px;width:146px;overflow:hidden;font-size:12px;color:#f1f1f1">Padding</div>
<div class="a t" style="left:155px;top:268.84px;font-size:12px;color:#f1f1f1;">0, 0, 0, 0</div>
<div class="a" style="left:0;top:285px;width:151px;height:18px;background:#1f1f1f"></div>
<div class="a" style="left:152px;top:285px;width:161px;height:18px;background:#1f1f1f"></div>
<div class="a t" style="left:4px;top:287.84px;width:146px;overflow:hidden;font-size:12px;color:#f1f1f1">RightToLeft</div>
<div class="a t" style="left:155px;top:287.84px;font-size:12px;color:#f1f1f1;">No</div>
<div class="a" style="left:0;top:304px;width:151px;height:18px;background:#1f1f1f"></div>
<div class="a" style="left:152px;top:304px;width:161px;height:18px;background:#1f1f1f"></div>
<div class="a t" style="left:4px;top:306.84px;width:146px;overflow:hidden;font-size:12px;color:#f1f1f1">RightToLeftLayout</div>
<div class="a t" style="left:155px;top:306.84px;font-size:12px;color:#f1f1f1;">False</div>
<div class="a" style="left:0;top:323px;width:151px;height:18px;background:#1f1f1f"></div>
<div class="a" style="left:152px;top:323px;width:161px;height:18px;background:#1f1f1f"></div>
<div class="a t" style="left:4px;top:325.84px;width:146px;overflow:hidden;font-size:12px;color:#f1f1f1">ShowIcon</div>
<div class="a t" style="left:155px;top:325.84px;font-size:12px;color:#f1f1f1;">True</div>
<div class="a" style="left:0;top:342px;width:151px;height:18px;background:#1f1f1f"></div>
<div class="a" style="left:152px;top:342px;width:161px;height:18px;background:#1f1f1f"></div>
<div class="a t" style="left:4px;top:344.84px;width:146px;overflow:hidden;font-size:12px;color:#f1f1f1">ShowInTaskbar</div>
<div class="a t" style="left:155px;top:344.84px;font-size:12px;color:#f1f1f1;">True</div>
<div class="a" style="left:0;top:361px;width:151px;height:18px;background:#1f1f1f"></div>
<div class="a" style="left:152px;top:361px;width:161px;height:18px;background:#1f1f1f"></div>
<div class="a t" style="left:4px;top:363.84px;width:146px;overflow:hidden;font-size:12px;color:#f1f1f1">Size</div>
<div class="a t" style="left:155px;top:363.84px;font-size:12px;color:#f1f1f1;font-weight:700;">816, 489</div>
<div class="a" style="left:0;top:380px;width:151px;height:18px;background:#1f1f1f"></div>
<div class="a" style="left:152px;top:380px;width:161px;height:18px;background:#1f1f1f"></div>
<div class="a t" style="left:4px;top:382.84px;width:146px;overflow:hidden;font-size:12px;color:#f1f1f1">SizeGripStyle</div>
<div class="a t" style="left:155px;top:382.84px;font-size:12px;color:#f1f1f1;">Auto</div>
<div class="a" style="left:0;top:399px;width:151px;height:18px;background:#1f1f1f"></div>
<div class="a" style="left:152px;top:399px;width:161px;height:18px;background:#1f1f1f"></div>
<div class="a t" style="left:4px;top:401.84px;width:146px;overflow:hidden;font-size:12px;color:#f1f1f1">StartPosition</div>
<div class="a t" style="left:155px;top:401.84px;font-size:12px;color:#f1f1f1;">WindowsDefaultLocation</div>
<div class="a" style="left:0;top:418px;width:151px;height:18px;background:#1f1f1f"></div>
<div class="a" style="left:152px;top:418px;width:161px;height:18px;background:#1f1f1f"></div>
<div class="a t" style="left:4px;top:420.84px;width:146px;overflow:hidden;font-size:12px;color:#f1f1f1">Tag</div>
<div class="a t" style="left:155px;top:420.84px;font-size:12px;color:#f1f1f1;"></div>
<div class="a" style="left:0;top:437px;width:151px;height:18px;background:#333333"></div>
<div class="a" style="left:152px;top:437px;width:161px;height:18px;background:#1f1f1f"></div>
<div class="a t" style="left:4px;top:439.84px;width:146px;overflow:hidden;font-size:12px;color:#f1f1f1">Text</div>
<div class="a t" style="left:155px;top:439.84px;font-size:12px;color:#f1f1f1;font-weight:700;">Form1</div>
<div class="a" style="left:0;top:456px;width:151px;height:18px;background:#1f1f1f"></div>
<div class="a" style="left:152px;top:456px;width:161px;height:18px;background:#1f1f1f"></div>
<div class="a t" style="left:4px;top:458.84px;width:146px;overflow:hidden;font-size:12px;color:#f1f1f1">ToolTip on toolTip1</div>
<div class="a t" style="left:155px;top:458.84px;font-size:12px;color:#f1f1f1;"></div>
</div>
<svg class="a" style="left:991px;top:270px;" width="9" height="9" viewBox="0 0 9 9"><rect x="0.5" y="0.5" width="8" height="8" fill="none" stroke="#e0e0e0"/><path d="M2 4.5 H7 M4.5 2 V7" stroke="#e0e0e0"/></svg>
<svg class="a" style="left:991px;top:346px;" width="9" height="9" viewBox="0 0 9 9"><rect x="0.5" y="0.5" width="8" height="8" fill="none" stroke="#e0e0e0"/><path d="M2 4.5 H7 M4.5 2 V7" stroke="#e0e0e0"/></svg>
<svg class="a" style="left:991px;top:403px;" width="9" height="9" viewBox="0 0 9 9"><rect x="0.5" y="0.5" width="8" height="8" fill="none" stroke="#e0e0e0"/><path d="M2 4.5 H7 M4.5 2 V7" stroke="#e0e0e0"/></svg>
<svg class="a" style="left:991px;top:441px;" width="9" height="9" viewBox="0 0 9 9"><rect x="0.5" y="0.5" width="8" height="8" fill="none" stroke="#e0e0e0"/><path d="M2 4.5 H7 M4.5 2 V7" stroke="#e0e0e0"/></svg>
<svg class="a" style="left:991px;top:536px;" width="9" height="9" viewBox="0 0 9 9"><rect x="0.5" y="0.5" width="8" height="8" fill="none" stroke="#e0e0e0"/><path d="M2 4.5 H7 M4.5 2 V7" stroke="#e0e0e0"/></svg>
<div class="a" style="left:1316px;top:171px;width:18px;height:464px;background:#2b2b2b;"></div>
<div class="a" style="left:1320px;top:398px;width:9px;height:176px;background:#4d4d4d;"></div>
<svg class="a" style="left:1320px;top:176px;" width="10" height="5" viewBox="0 0 10 5"><path d="M0 5 H10 L5 0Z" fill="#8a8a8a"/></svg>
<svg class="a" style="left:1320px;top:624px;" width="10" height="5" viewBox="0 0 10 5"><path d="M0 0 H10 L5 5Z" fill="#8a8a8a"/></svg>
<div class="a t" style="left:994px;top:643.84px;font-size:12px;color:#ffffff;font-weight:700;">Text</div>
<div class="a t" style="left:994px;top:661.84px;font-size:12px;color:#f1f1f1;">Texto asociado al control.</div>
<div class="a t" style="left:1036px;top:652.07px;font-size:20px;color:rgba(200,200,200,0.45);">Activar Windows</div>
<div class="a t" style="left:1036px;top:678.39px;font-size:14.9px;color:rgba(200,200,200,0.45);">Ve a Configuración para activar Windows.</div>
<div class="a t" style="left:1354px;top:97px;transform-origin:0 0;transform:rotate(90deg);font-size:11.7px;color:#d0d0d0">Explorador de soluciones</div>
<div class="a t" style="left:1354px;top:240px;transform-origin:0 0;transform:rotate(90deg);font-size:11.6px;color:#d0d0d0">Cambios de GIT</div>
<div class="a" style="left:1360px;top:97px;width:6px;height:133px;background:#3a3a3a;"></div>
<div class="a" style="left:1360px;top:240px;width:6px;height:86px;background:#3a3a3a;"></div>
<div class="a" style="left:112px;top:105px;width:800px;height:480px;background:#f0f0f0;"></div>
<div class="a" style="left:112px;top:105px;width:800px;height:30px;background:#ffffff;"></div>
<svg class="a" style="left:122px;top:112px;" width="12" height="12" viewBox="0 0 12 12"><rect x="5" y="0" width="7" height="7" fill="#3a3a3a"/><rect x="0" y="4" width="4" height="4" fill="#3a3a3a"/><rect x="5" y="8" width="5" height="4" fill="#3a3a3a"/></svg>
<div class="a t" style="left:141px;top:113.84px;font-size:12px;color:#000000;">Form1</div>
<div class="a" style="left:793px;top:119px;width:10px;height:1px;background:#000;"></div>
<div class="a" style="left:838px;top:114px;width:10px;height:10px;box-sizing:border-box;border:1px solid #000;"></div>
<svg class="a" style="left:884px;top:114px;" width="11" height="11" viewBox="0 0 11 11"><path d="M0.3 0.3 L10.5 10.5 M10.5 0.3 L0.3 10.5" stroke="#000" stroke-width="1"/></svg>
<div class="a" style="left:421px;top:220px;width:100px;height:23px;background:#ffffff;box-sizing:border-box;border:1px solid #0078d7;"></div>
<div class="a" style="left:560px;top:221px;width:73px;height:21px;background:#e5f1fb;box-sizing:border-box;border:1px solid #0078d7;"></div>
<div class="a t" style="left:575px;top:225.84px;font-size:12px;color:#000;">button1</div>
<div class="a" style="left:601px;top:246px;width:146px;height:20px;background:rgba(0,0,0,0.12);"></div>
<div class="a" style="left:598px;top:243px;width:146px;height:20px;background:#ffffff;box-sizing:border-box;border:1px solid #767676;"></div>
<div class="a t" style="left:604px;top:246.84px;font-size:12px;color:#575757;transform-origin:0 0;transform:scaleX(0.9784);">Calcula en que año nacio</div>
<div class="a" style="left:0px;top:705px;width:1366px;height:23px;background:#881b2d;"></div>
<svg class="a" style="left:5px;top:709px;" width="17" height="16" viewBox="0 0 17 16"><path d="M0.7 0.7 H15.3 V12.3 H10 L8 14.8 L6 12.3 H0.7Z" fill="#9b3445" stroke="#ffffff" stroke-width="1.3"/></svg>
<div class="a t" style="left:28px;top:710.84px;font-size:12px;color:#ffffff;">Listo</div>
<svg class="a" style="left:912px;top:710px;" width="12" height="13" viewBox="0 0 12 13"><path d="M6 13 V1 M1 6 L6 1 L11 6" fill="none" stroke="#fff" stroke-width="1.2"/></svg>
<div class="a t" style="left:933px;top:710.84px;font-size:12px;color:#ffffff;transform-origin:0 0;transform:scaleX(1.0065);">Agregar al control de código fuente</div>
<svg class="a" style="left:1127px;top:714px;" width="9" height="5" viewBox="0 0 9 5"><path d="M0 5 H9 L4.5 0Z" fill="#fff"/></svg>
<svg class="a" style="left:1158px;top:710px;" width="14" height="13" viewBox="0 0 14 13"><path d="M0.5 0.5 H13.5 V3.5 H0.5Z M1.5 3.5 V12.5 H12.5 V3.5 M4.5 6 V10.5 H9.5 V6 M7 6 V10" fill="none" stroke="#fff"/></svg>
<div class="a t" style="left:1179px;top:710.84px;font-size:12px;color:#ffffff;transform-origin:0 0;transform:scaleX(0.9790);">Seleccionar repositorio</div>
<svg class="a" style="left:1305px;top:714px;" width="9" height="5" viewBox="0 0 9 5"><path d="M0 5 H9 L4.5 0Z" fill="#fff"/></svg>
<svg class="a" style="left:1334px;top:708px;" width="22" height="20" viewBox="0 0 22 20"><path d="M1.5 13 C2.5 11.5 2.5 9.5 2.5 7 C2.5 4 4.5 1.5 7 1.5 C9.5 1.5 11.5 4 11.5 7 C11.5 9.5 11.5 11.5 12.5 13Z" fill="#9b3445" stroke="#fff" stroke-width="1.1"/><path d="M5.5 14.5 C6 15.5 8 15.5 8.5 14.5" fill="none" stroke="#fff" stroke-width="1.1"/><circle cx="14" cy="12" r="6" fill="#f5a0a8"/><path d="M12.2 9.5 L14.5 8 V16" fill="none" stroke="#3a0a1e" stroke-width="1.3"/></svg>
<div class="a" style="left:0;top:728px;width:1366px;height:40px;background:linear-gradient(90deg,#2e3236 0px,#282b2f 400px,#2b2829 450px,#2e302e 600px,#34332b 750px,#35342a 870px,#2a2a24 1050px,#242428 1090px,#22212f 1160px,#222232 1366px)"></div>
<svg class="a" style="left:15px;top:740px;" width="17" height="16" viewBox="0 0 17 16"><path d="M0 2.2 L7 1.2 V7.6 H0Z M8 1 L17 0 V7.6 H8Z M0 8.6 H7 V15 L0 14Z M8 8.6 H17 V16 L8 15Z" fill="#ffffff"/></svg>
<div class="a" style="left:48px;top:728px;width:344px;height:40px;background:#f0f0f0;"></div>
<svg class="a" style="left:60px;top:740px;" width="17" height="17" viewBox="0 0 17 17"><circle cx="10" cy="6.5" r="5.5" fill="none" stroke="#222" stroke-width="1.3"/><path d="M6 10.5 L1 15.5" stroke="#222" stroke-width="1.5"/></svg>
<div class="a t" style="left:88px;top:741.81px;font-size:14.4px;color:#333333;">Escribe aquí para buscar</div>
<div class="a" style="left:48px;top:728px;width:344px;height:1px;background:#b8b8b8;"></div>
<div class="a" style="left:48px;top:767px;width:344px;height:1px;background:#c8c8c8;"></div>
<svg class="a" style="left:310px;top:728px" width="82" height="40" viewBox="310 728 82 40"><path d="M328 745 C329 752 326 760 322 768 L327.5 768 C330 760 331.5 752 330.5 745Z" fill="#d69b35"/><path d="M376 745 C376 752 379 760 381 768 L385.5 768 C384 760 380 752 378.5 745Z" fill="#d69b35"/><path d="M330.0 742.0 Q324.8 735.8 318.4 738.9 Q323.6 740.1 330.0 742.0Z" fill="#5aa332"/><path d="M330.0 742.0 Q324.2 737.9 318.4 738.9" fill="none" stroke="#2f7a2a" stroke-width="0.6"/><path d="M330.0 742.0 Q326.8 734.0 320.8 734.3 Q324.0 737.3 330.0 742.0Z" fill="#5aa332"/><path d="M330.0 742.0 Q325.4 735.6 320.8 734.3" fill="none" stroke="#2f7a2a" stroke-width="0.6"/><path d="M330.0 742.0 Q330.4 734.0 326.6 732.6 Q326.2 735.6 330.0 742.0Z" fill="#5aa332"/><path d="M330.0 742.0 Q328.3 734.8 326.6 732.6" fill="none" stroke="#2f7a2a" stroke-width="0.6"/><path d="M330.0 742.0 Q333.4 735.2 332.6 732.3 Q329.2 734.1 330.0 742.0Z" fill="#5aa332"/><path d="M330.0 742.0 Q331.3 734.7 332.6 732.3" fill="none" stroke="#2f7a2a" stroke-width="0.6"/><path d="M330.0 742.0 Q336.0 737.3 339.2 734.3 Q333.2 734.0 330.0 742.0Z" fill="#5aa332"/><path d="M330.0 742.0 Q334.6 735.6 339.2 734.3" fill="none" stroke="#2f7a2a" stroke-width="0.6"/><path d="M330.0 742.0 Q336.4 740.1 341.6 738.9 Q335.2 735.8 330.0 742.0Z" fill="#5aa332"/><path d="M330.0 742.0 Q335.8 737.9 341.6 738.9" fill="none" stroke="#2f7a2a" stroke-width="0.6"/><path d="M330.0 742.0 Q333.5 743.1 338.5 745.1 Q335.0 739.0 330.0 742.0Z" fill="#5aa332"/><path d="M330.0 742.0 Q334.2 741.0 338.5 745.1" fill="none" stroke="#2f7a2a" stroke-width="0.6"/><path d="M330.0 742.0 Q325.0 739.0 321.5 745.1 Q326.5 743.1 330.0 742.0Z" fill="#5aa332"/><path d="M330.0 742.0 Q325.8 741.0 321.5 745.1" fill="none" stroke="#2f7a2a" stroke-width="0.6"/><path d="M330.0 742.0 Q329.8 743.6 333.5 748.1 Q333.7 741.4 330.0 742.0Z" fill="#5aa332"/><path d="M330.0 742.0 Q331.8 742.5 333.5 748.1" fill="none" stroke="#2f7a2a" stroke-width="0.6"/><path d="M330.0 742.0 Q326.3 741.4 326.5 748.1 Q330.2 743.6 330.0 742.0Z" fill="#5aa332"/><path d="M330.0 742.0 Q328.2 742.5 326.5 748.1" fill="none" stroke="#2f7a2a" stroke-width="0.6"/><path d="M377.0 741.5 Q371.8 735.3 365.4 738.4 Q370.6 739.6 377.0 741.5Z" fill="#5aa332"/><path d="M377.0 741.5 Q371.2 737.4 365.4 738.4" fill="none" stroke="#2f7a2a" stroke-width="0.6"/><path d="M377.0 741.5 Q373.8 733.5 367.8 733.8 Q371.0 736.8 377.0 741.5Z" fill="#5aa332"/><path d="M377.0 741.5 Q372.4 735.1 367.8 733.8" fill="none" stroke="#2f7a2a" stroke-width="0.6"/><path d="M377.0 741.5 Q377.4 733.5 373.6 732.1 Q373.2 735.1 377.0 741.5Z" fill="#5aa332"/><path d="M377.0 741.5 Q375.3 734.3 373.6 732.1" fill="none" stroke="#2f7a2a" stroke-width="0.6"/><path d="M377.0 741.5 Q380.4 734.7 379.6 731.8 Q376.2 733.6 377.0 741.5Z" fill="#5aa332"/><path d="M377.0 741.5 Q378.3 734.2 379.6 731.8" fill="none" stroke="#2f7a2a" stroke-width="0.6"/><path d="M377.0 741.5 Q383.0 736.8 386.2 733.8 Q380.2 733.5 377.0 741.5Z" fill="#5aa332"/><path d="M377.0 741.5 Q381.6 735.1 386.2 733.8" fill="none" stroke="#2f7a2a" stroke-width="0.6"/><path d="M377.0 741.5 Q383.4 739.6 388.6 738.4 Q382.2 735.3 377.0 741.5Z" fill="#5aa332"/><path d="M377.0 741.5 Q382.8 737.4 388.6 738.4" fill="none" stroke="#2f7a2a" stroke-width="0.6"/><path d="M377.0 741.5 Q380.5 742.6 385.5 744.6 Q382.0 738.5 377.0 741.5Z" fill="#5aa332"/><path d="M377.0 741.5 Q381.2 740.5 385.5 744.6" fill="none" stroke="#2f7a2a" stroke-width="0.6"/><path d="M377.0 741.5 Q372.0 738.5 368.5 744.6 Q373.5 742.6 377.0 741.5Z" fill="#5aa332"/><path d="M377.0 741.5 Q372.8 740.5 368.5 744.6" fill="none" stroke="#2f7a2a" stroke-width="0.6"/><path d="M377.0 741.5 Q376.8 743.1 380.5 747.6 Q380.7 740.9 377.0 741.5Z" fill="#5aa332"/><path d="M377.0 741.5 Q378.8 742.0 380.5 747.6" fill="none" stroke="#2f7a2a" stroke-width="0.6"/><path d="M377.0 741.5 Q373.3 740.9 373.5 747.6 Q377.2 743.1 377.0 741.5Z" fill="#5aa332"/><path d="M377.0 741.5 Q375.2 742.0 373.5 747.6" fill="none" stroke="#2f7a2a" stroke-width="0.6"/><circle cx="329" cy="743.5" r="1.6" fill="#b86c12"/><circle cx="331.5" cy="742.5" r="1.6" fill="#b86c12"/><circle cx="377" cy="743" r="1.6" fill="#b86c12"/><path d="M329.5 748 L337 753.5 M329.5 749 L335.5 756 M377 748 L369 752.5 M377 749 L370 755" stroke="#2a5bb0" stroke-width="0.8"/><path d="M335.5 752.5 C345 755 360 755 369 751.5 C367 759 359 765 351.5 765 C344 765 338 759 335.5 752.5Z" fill="#2a6cc8"/><path d="M337.5 757 C346 759.5 358 759.5 367 756" stroke="#58c4de" stroke-width="2" fill="none"/></svg>
<svg class="a" style="left:407px;top:740px;" width="18" height="16" viewBox="0 0 18 16"><path d="M1 0 V2.5 H11.5 V0 M1 15.5 V13 H11.5 V15.5" fill="none" stroke="#fff" stroke-width="1.1"/><rect x="1" y="4.5" width="10.5" height="6.5" fill="none" stroke="#fff" stroke-width="1.1"/><path d="M15.5 0 V2.5 M15.5 7.5 V15.5" stroke="#fff" stroke-width="1"/><rect x="14" y="4" width="3" height="2.8" fill="#fff"/></svg>
<svg class="a" style="left:451px;top:737px;" width="26" height="23" viewBox="0 0 26 23"><path d="M0 8 L13 0 L26 8 V22 H0Z" fill="#0f6cbd"/><path d="M3 8 H23 L13 15Z" fill="#f0f0f0"/><path d="M0 8 L13 16 L26 8 V22 H0Z" fill="#2aa0e8"/><path d="M0 22 L11 13 L13 14 L15 13 L26 22Z" fill="#3bb4f0"/></svg>
<svg class="a" style="left:494px;top:735px;" width="25" height="25" viewBox="0 0 25 25"><defs><linearGradient id="eg" x1="0.2" y1="0" x2="1" y2="0.7"><stop offset="0" stop-color="#2fb0ea"/><stop offset="0.55" stop-color="#37c8a0"/><stop offset="1" stop-color="#5fe070"/></linearGradient><linearGradient id="eb" x1="0" y1="0" x2="0.6" y2="1"><stop offset="0" stop-color="#2196e8"/><stop offset="1" stop-color="#0b4fa0"/></linearGradient></defs><circle cx="12.5" cy="12.5" r="12" fill="url(#eg)"/><path d="M1 11 C1.5 5 7 2 12 3 C6 4 3.5 9 4 13.5 C4.5 19 9 23.5 15 24 C13 24.8 10.5 24.8 8.5 24 C3.5 22 0.5 17 1 11Z" fill="url(#eb)"/><path d="M4 13.5 C3.8 8.5 7.5 5.5 12 6 C16.5 6.5 19 10 18.5 13 L13 13.5 C10 13.8 9 16 10 18.5 C11.5 22 16 24 21 22 C18 24.3 13 25 9 23 C5.5 21 4.2 17.5 4 13.5Z" fill="#1565c0"/><path d="M10.5 16.5 C10.5 14 12.5 13.2 15 13.2 L18.5 13 C20 15 22 16 24 15.5 C23 19 20.5 21 17 21 C13.5 21 10.5 19.5 10.5 16.5Z" fill="#1f2a3a"/></svg>
<div class="a" style="left:490px;top:766px;width:34px;height:2px;background:#76b9ed;"></div>
<svg class="a" style="left:539px;top:738px;" width="22" height="19" viewBox="0 0 22 19"><path d="M0 0 H8 L10 2 H22 V19 H0Z" fill="#e6a82a"/><rect x="0" y="4" width="22" height="15" fill="#fcd86a"/><path d="M5 19 V10 H17 V19 H14 V14 H8 V19Z" fill="#3a8ee6"/></svg>
<svg class="a" style="left:581px;top:736px;" width="24" height="24" viewBox="0 0 24 24"><circle cx="12" cy="12" r="12" fill="#dd4a3c"/><path d="M12 12 L1.6 6 A12 12 0 0 0 9 23.6Z" fill="#24a152"/><path d="M12 12 L9 23.6 A12 12 0 0 0 22.4 6 L12 6Z" fill="#fcc934"/><path d="M12 6 H22.4 A12 12 0 0 0 1.6 6 L6.8 15Z" fill="#dd4a3c"/><circle cx="12" cy="12" r="5.3" fill="#fff"/><circle cx="12" cy="12" r="4.2" fill="#3b7ded"/></svg>
<svg class="a" style="left:624px;top:736px;" width="24" height="24" viewBox="0 0 24 24"><circle cx="12" cy="12" r="12" fill="#000"/><path d="M13 5 V14.5 A3 3 0 1 1 10 11.5" fill="none" stroke="#25f4ee" stroke-width="2"/><path d="M14 6 V15.5 A3 3 0 1 1 11 12.5 M14 6 C14.5 8 16 9 18 9" fill="none" stroke="#fe2c55" stroke-width="2"/><path d="M13.5 5.5 V15 A3 3 0 1 1 10.5 12 M13.5 5.5 C14 7.5 15.5 8.5 17.5 8.5" fill="none" stroke="#fff" stroke-width="1.6"/></svg>
<svg class="a" style="left:667px;top:736px;" width="24" height="24" viewBox="0 0 24 24"><rect x="0" y="0" width="24" height="24" rx="10" fill="#1a5af0"/><text x="3" y="16" font-size="11" font-weight="700" fill="#fff" font-family="Liberation Sans">zm</text></svg>
<svg class="a" style="left:711px;top:737px;" width="23" height="22" viewBox="0 0 23 22"><rect x="9" y="3" width="13" height="16" fill="#fff" stroke="#2b579a"/><path d="M12 6 H20 M12 8.5 H20 M12 11 H20 M12 13.5 H20 M12 16 H20" stroke="#2b579a"/><path d="M0 3 L13 0 V22 L0 19Z" fill="#2b579a"/><text x="1.5" y="15" font-size="9" font-weight="700" fill="#fff" font-family="Liberation Sans">W</text></svg>
<svg class="a" style="left:753px;top:737px;" width="23" height="22" viewBox="0 0 23 22"><rect x="9" y="3" width="13" height="16" fill="#fff" stroke="#d24726"/><path d="M13 14 H20 M13 16.5 H20" stroke="#d24726"/><path d="M16 5 A3.5 3.5 0 1 0 19.5 8.5 H16Z" fill="#d24726"/><path d="M0 3 L13 0 V22 L0 19Z" fill="#d24726"/><text x="2" y="15" font-size="9.5" font-weight="700" fill="#fff" font-family="Liberation Sans">P</text></svg>
<svg class="a" style="left:796px;top:736px;" width="24" height="24" viewBox="0 0 24 24"><circle cx="12" cy="12" r="12" fill="#1ed760"/><path d="M5 8.5 C9 7 15 7 19 9.5 M6 12 C9.5 11 14 11 17.5 13 M7 15.5 C10 14.5 13 14.5 16 16" fill="none" stroke="#111" stroke-width="1.9" stroke-linecap="round"/></svg>
<svg class="a" style="left:841px;top:738px;" width="20" height="20" viewBox="0 0 20 20"><g fill="#fff"><circle cx="10" cy="10" r="7"/><rect x="7.8" y="0.5" width="4.4" height="19" rx="1"/><rect x="0.5" y="7.8" width="19" height="4.4" rx="1"/><rect x="7.8" y="0.5" width="4.4" height="19" rx="1" transform="rotate(45 10 10)"/><rect x="7.8" y="0.5" width="4.4" height="19" rx="1" transform="rotate(-45 10 10)"/></g><circle cx="10" cy="10" r="3.6" fill="#33322a"/></svg>
<svg class="a" style="left:882px;top:737px;" width="22" height="20" viewBox="0 0 22 20"><rect x="0.8" y="0.8" width="20.4" height="18.4" fill="#1f0740" stroke="#c48ef8" stroke-width="1.6"/><text x="3.2" y="15" font-size="12.5" fill="#d2a8ff" font-family="Liberation Sans">Ae</text></svg>
<svg class="a" style="left:924px;top:736px;" width="22" height="23" viewBox="0 0 22 23"><rect x="0" y="0" width="22" height="22" rx="4" fill="#1a3446"/><path d="M0 16.5 H22 V18 A4 4 0 0 1 18 22 H4 A4 4 0 0 1 0 18Z" fill="#fff"/><path d="M9 18.5 L11 20 L13 18.5" stroke="#1a3446" stroke-width="1" fill="none"/><path d="M8.5 7.5 L15.5 12 L9.5 14.5 L11 11Z" fill="#4ee0c0"/><rect x="7.5" y="2.5" width="4" height="4" fill="#fff" transform="rotate(45 9.5 4.5)"/></svg>
<svg class="a" style="left:964px;top:735px;" width="26" height="26" viewBox="0 0 26 26"><path d="M0.9 7.8 L5.8 4.2 V21.3 L0.9 17.7Z" fill="#7040b8"/><path d="M0.9 17.7 L18.3 0.9 V9.5 L5.8 21.3Z" fill="#8553cc"/><path d="M0.9 7.8 L5.8 4.2 L18.3 16.1 V25 Z" fill="#a97ae8"/><path d="M4.3 10.6 L7 13.1 L4.3 15.4Z" fill="#2b2a24"/><path d="M18.3 9.3 L15.6 12.8 L18.3 16.3Z" fill="#2b2a24"/><path d="M18.3 0.9 L25.1 4.9 V20.4 L18.3 25Z" fill="#d49cf8"/></svg>
<div class="a" style="left:961px;top:766px;width:33px;height:2px;background:#76b9ed;"></div>
<div class="a" style="left:999px;top:728px;width:41px;height:40px;background:#55544c;"></div>
<svg class="a" style="left:1007px;top:736px;" width="24" height="23" viewBox="0 0 24 23"><rect x="9.5" y="1.5" width="13" height="13.5" rx="0.5" fill="#404040" stroke="#e6e6e6" stroke-width="1.6"/><rect x="1.5" y="7.5" width="8" height="12" rx="0.5" fill="#404040" stroke="#e6e6e6" stroke-width="1.6"/><rect x="9.5" y="14.5" width="10.5" height="6.5" rx="0.5" fill="#404040" stroke="#e6e6e6" stroke-width="1.6"/></svg>
<div class="a" style="left:999px;top:766px;width:41px;height:2px;background:#76b9ed;"></div>
<svg class="a" style="left:1068px;top:737px;" width="21" height="21" viewBox="0 0 21 21"><defs><radialGradient id="wo" cx="0.35" cy="0.3" r="0.8"><stop offset="0" stop-color="#ffb347"/><stop offset="0.6" stop-color="#ff8a1e"/><stop offset="1" stop-color="#f05a14"/></radialGradient></defs><circle cx="10.5" cy="10.5" r="10.3" fill="url(#wo)"/></svg>
<div class="a t" style="left:1098px;top:741.15px;font-size:14px;color:#ffffff;transform-origin:0 0;transform:scaleX(0.9271);">25°C</div>
<svg class="a" style="left:1153px;top:744px;" width="13" height="7" viewBox="0 0 13 7"><path d="M0.5 6.5 L6.5 0.8 L12.5 6.5" fill="none" stroke="#fff" stroke-width="1.2"/></svg>
<svg class="a" style="left:1174px;top:741px;" width="16" height="14" viewBox="0 0 16 14"><path d="M0.5 4.5 H3.5 L7.5 0.8 V13.2 L3.5 9.5 H0.5Z" fill="none" stroke="#fff" stroke-width="1"/><path d="M10 4.5 L14.5 9 M14.5 4.5 L10 9" stroke="#fff" stroke-width="1.1"/></svg>
<svg class="a" style="left:1200px;top:743px;" width="16" height="10" viewBox="0 0 16 10"><rect x="0.5" y="0.5" width="13" height="9" fill="none" stroke="#fff" stroke-width="1"/><rect x="2" y="2" width="6" height="6" fill="#fff"/><rect x="14" y="3" width="2" height="4" fill="#fff"/></svg>
<svg class="a" style="left:1225px;top:742px;" width="15" height="14" viewBox="0 0 15 14"><path d="M1 13 A12 12 0 0 1 13 1 M4 13 A9 9 0 0 1 13 4 M7 13 A6 6 0 0 1 13 7" fill="none" stroke="#fff" stroke-width="1.2"/><circle cx="12.5" cy="12.5" r="1.7" fill="#fff"/></svg>
<div class="a t" style="left:1250px;top:732.84px;font-size:12px;color:#ffffff;transform-origin:0 0;transform:scaleX(0.9411);">08:41 a. m.</div>
<div class="a t" style="left:1249px;top:750.84px;font-size:12px;color:#ffffff;transform-origin:0 0;transform:scaleX(0.9658);">27/05/2024</div>
<svg class="a" style="left:1325px;top:740px;" width="17" height="16" viewBox="0 0 17 16"><path d="M0.6 0.6 H15.4 V11.4 H10 L8 14.5 L6 11.4 H0.6Z" fill="none" stroke="#fff" stroke-width="1.1"/></svg>
<div class="a" style="left:1361px;top:728px;width:1px;height:40px;background:#5a5a60;"></div>
</body></html>
